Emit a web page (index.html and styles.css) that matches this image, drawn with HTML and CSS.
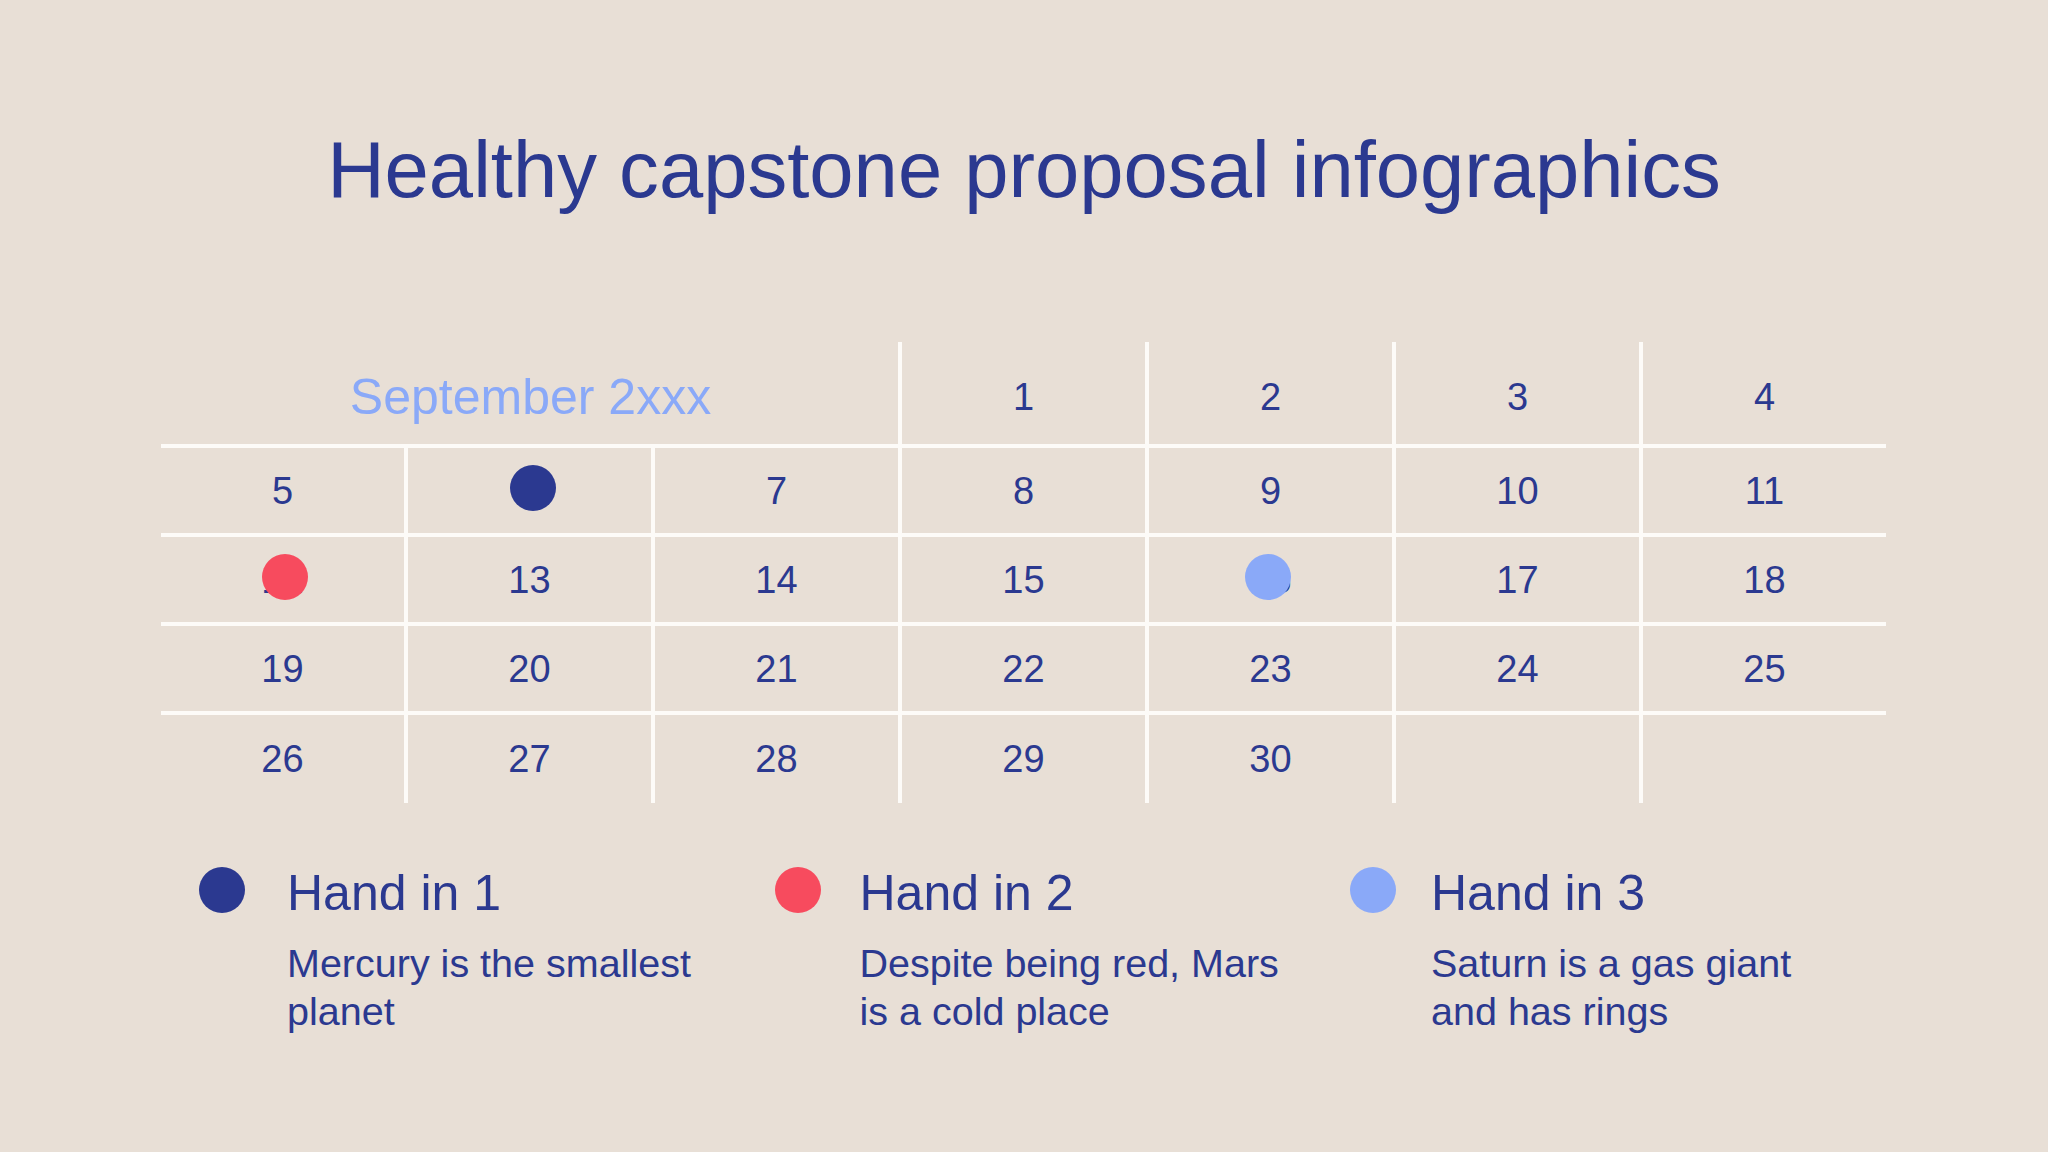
FILE: index.html
```html
<!DOCTYPE html>
<html lang="en">
<head>
<meta charset="utf-8">
<title>Healthy capstone proposal infographics</title>
<link rel="stylesheet" href="styles.css">
</head>
<body>
<main class="slide">
  <h1 class="title">Healthy capstone proposal infographics</h1>

  <div class="calendar">
    <div class="cell head month">September 2xxx</div>
    <div class="cell head">1</div>
    <div class="cell head">2</div>
    <div class="cell head">3</div>
    <div class="cell head">4</div>

    <div class="cell">5</div>
    <div class="cell">6<span class="mark mark-dark"></span></div>
    <div class="cell">7</div>
    <div class="cell">8</div>
    <div class="cell">9</div>
    <div class="cell">10</div>
    <div class="cell">11</div>

    <div class="cell">12<span class="mark mark-red"></span></div>
    <div class="cell">13</div>
    <div class="cell">14</div>
    <div class="cell">15</div>
    <div class="cell">16<span class="mark mark-light mark-left"></span></div>
    <div class="cell">17</div>
    <div class="cell">18</div>

    <div class="cell">19</div>
    <div class="cell">20</div>
    <div class="cell">21</div>
    <div class="cell">22</div>
    <div class="cell">23</div>
    <div class="cell">24</div>
    <div class="cell">25</div>

    <div class="cell">26</div>
    <div class="cell">27</div>
    <div class="cell">28</div>
    <div class="cell">29</div>
    <div class="cell">30</div>
    <div class="cell"></div>
    <div class="cell"></div>
  </div>

  <div class="legend">
    <div class="item item-1">
      <span class="dot dark"></span>
      <h2 class="item-title">Hand in 1</h2>
      <p class="item-text">Mercury is the smallest planet</p>
    </div>
    <div class="item item-2">
      <span class="dot red"></span>
      <h2 class="item-title">Hand in 2</h2>
      <p class="item-text">Despite being red, Mars is a cold place</p>
    </div>
    <div class="item item-3">
      <span class="dot light"></span>
      <h2 class="item-title">Hand in 3</h2>
      <p class="item-text">Saturn is a gas giant and has rings</p>
    </div>
  </div>
</main>
</body>
</html>
```

FILE: styles.css
```css
* {
  box-sizing: border-box;
}

html, body {
  margin: 0;
  padding: 0;
}

body {
  background: #e8dfd6;
  font-family: "Liberation Sans", Arial, sans-serif;
  color: #2b3990;
}

.slide {
  width: 2048px;
  height: 1152px;
  padding-top: 130px;
  overflow: hidden;
}

.title {
  margin: 0;
  font-size: 79.6px;
  line-height: 80px;
  font-weight: normal;
  text-align: center;
  color: #2b3990;
}

/* calendar: white gaps form the grid lines */
.calendar {
  margin: 132px 0 0 161px;
  width: 1725px;
  display: grid;
  grid-template-columns: repeat(7, 1fr);
  grid-template-rows: 102px 85px 85px 85px 88px;
  gap: 4px;
  background: #fdfbf8;
}

.cell {
  position: relative;
  background: #e8dfd6;
  display: flex;
  align-items: center;
  justify-content: center;
  font-size: 38px;
  line-height: 1;
  color: #2b3990;
}

.head {
  padding-top: 7px;
}

.month {
  grid-column: span 3;
  font-size: 50px;
  color: #8aa9f8;
  padding-left: 2px;
}

.mark {
  position: absolute;
  width: 46px;
  height: 46px;
  border-radius: 50%;
  top: calc(50% - 26px);
  left: calc(50% - 20px);
}

.mark-red {
  left: calc(50% - 21px);
}

.mark-left {
  left: calc(50% - 26px);
}

.mark-dark { background: #2b3990; }
.mark-red { background: #f74b5e; }
.mark-light { background: #8aa9f8; }

/* legend */
.legend {
  margin-top: 65px;
  padding-left: 199px;
  display: grid;
  grid-template-columns: repeat(3, 575.5px);
}

.item {
  display: grid;
  grid-template-columns: 46px 1fr;
  column-gap: 42px;
  row-gap: 21px;
  align-items: start;
}

.item-2 {
  column-gap: 39px;
}

.item-3 {
  column-gap: 35px;
}

.dot {
  grid-column: 1;
  grid-row: 1;
  width: 46px;
  height: 46px;
  margin-top: -1px;
  border-radius: 50%;
}

.dot.dark { background: #2b3990; }
.dot.red { background: #f74b5e; }
.dot.light { background: #8aa9f8; }

.item-title {
  grid-column: 2;
  grid-row: 1;
  margin: 0;
  font-size: 50px;
  line-height: 50px;
  font-weight: normal;
  color: #2b3990;
}

.item-text {
  grid-column: 2;
  grid-row: 2;
  margin: 0;
  width: 428px;
  font-size: 39.5px;
  line-height: 48px;
  color: #2b3990;
}
```
